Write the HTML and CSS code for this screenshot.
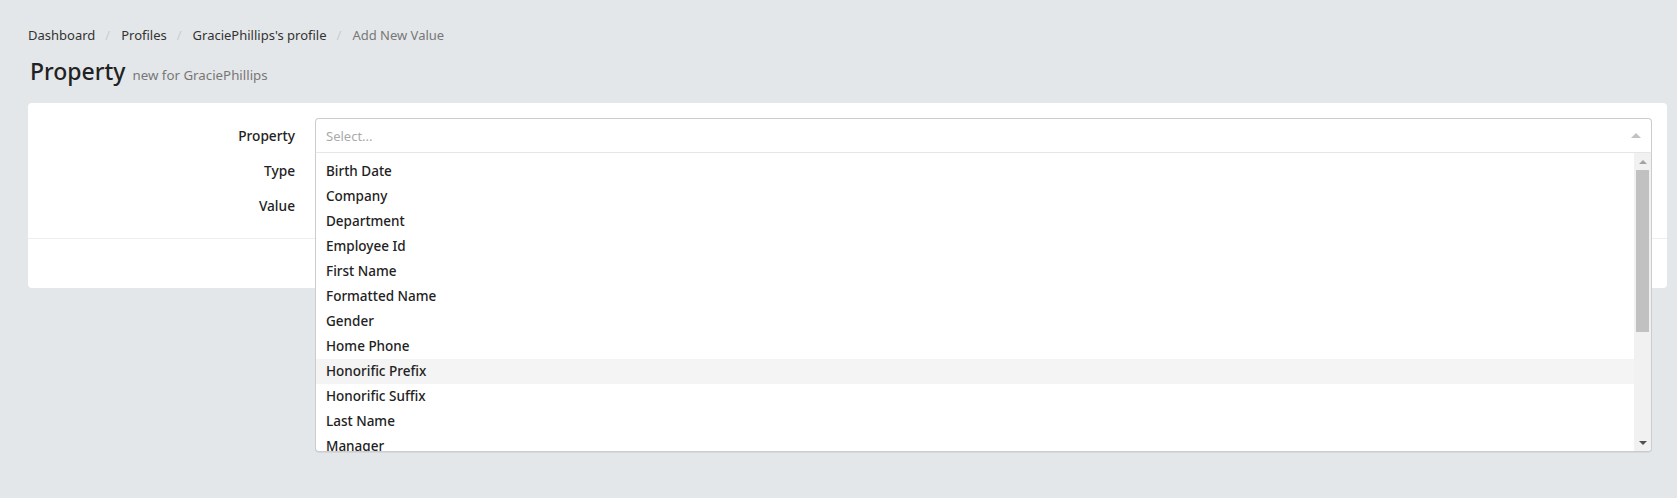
FILE: index.html
```html
<!DOCTYPE html>
<html lang="en">
<head>
<meta charset="utf-8">
<title>Property - new for GraciePhillips</title>
<link rel="stylesheet" href="styles.css">
</head>
<body>
<div class="page">
  <ol class="breadcrumb">
    <li><a href="#">Dashboard</a></li>
    <li class="sep">/</li>
    <li><a href="#">Profiles</a></li>
    <li class="sep">/</li>
    <li><a href="#">GraciePhillips's profile</a></li>
    <li class="sep">/</li>
    <li class="active">Add New Value</li>
  </ol>
  <h1 class="title">Property <small>new for GraciePhillips</small></h1>

  <div class="card">
    <div class="card-body">
      <div class="form-row">
        <label class="label">Property</label>
        <div class="field">
          <div class="select">
            <div class="select-control">
              <span class="placeholder">Select...</span>
              <span class="arrow"></span>
            </div>
            <div class="menu">
              <div class="options">
                <div class="option">Birth Date</div>
                <div class="option">Company</div>
                <div class="option">Department</div>
                <div class="option">Employee Id</div>
                <div class="option">First Name</div>
                <div class="option">Formatted Name</div>
                <div class="option">Gender</div>
                <div class="option">Home Phone</div>
                <div class="option focused">Honorific Prefix</div>
                <div class="option">Honorific Suffix</div>
                <div class="option">Last Name</div>
                <div class="option">Manager</div>
              </div>
              <div class="scrollbar">
                <div class="sb-btn"><span class="sb-up"></span></div>
                <div class="sb-track"><div class="sb-thumb"></div></div>
                <div class="sb-btn"><span class="sb-down"></span></div>
              </div>
            </div>
          </div>
        </div>
      </div>
      <div class="form-row">
        <label class="label">Type</label>
        <div class="field"></div>
      </div>
      <div class="form-row">
        <label class="label">Value</label>
        <div class="field"></div>
      </div>
    </div>
    <div class="card-footer"></div>
  </div>
</div>
</body>
</html>
```

FILE: styles.css
```css
* { box-sizing: border-box; }
html, body {
  margin: 0;
  padding: 0;
  background: #e4e7e9;
  font-family: "Noto Sans", "Open Sans", sans-serif;
  font-size: 13px;
  color: #333;
}
body {
  min-height: 100vh;
}
.page {
  padding: 26px 10px 0 28px;
}
.breadcrumb {
  list-style: none;
  margin: 0;
  padding: 0;
  display: flex;
  align-items: center;
  height: 18px;
  line-height: 18px;
}
.breadcrumb a {
  color: #333;
  text-decoration: none;
}
.breadcrumb .sep {
  color: #ccc;
  margin: 0 11px 0 10px;
}
.breadcrumb .active {
  color: #777;
}
.title {
  margin: 10px 0 0 2px;
  font-size: 23px;
  font-weight: 500;
  line-height: 34px;
  height: 34px;
  color: #222;
}
.title small {
  font-size: 13.3px;
  font-weight: 400;
  color: #777;
  padding-left: 1px;
}
.card {
  margin-top: 15px;
  background: #fff;
  border-radius: 4px;
  height: 185px;
  display: flex;
  flex-direction: column;
}
.card-body {
  padding: 15px 15px 15px 0;
  border-bottom: 1px solid #eee;
}
.card-footer {
  flex: 1;
}
.form-row {
  display: flex;
  height: 35px;
  align-items: center;
}
.label {
  width: 267px;
  text-align: right;
  color: #222;
  font-size: 13.7px;
  font-weight: 500;
  flex: none;
}
.field {
  flex: 1;
  margin-left: 20px;
  height: 35px;
  position: relative;
}
.select {
  position: relative;
  z-index: 5;
}
.select-control {
  height: 35px;
  border: 1px solid #ccc;
  border-bottom-color: #e6e6e6;
  border-radius: 4px 4px 0 0;
  background: #fff;
  display: flex;
  align-items: center;
  padding: 0 10px;
}
.placeholder {
  flex: 1;
  color: #aaa;
}
.arrow {
  width: 0;
  height: 0;
  border-style: solid;
  border-width: 0 5px 5px;
  border-color: transparent transparent #c2c2c2;
}
.menu {
  position: absolute;
  top: 35px;
  left: 0;
  right: 0;
  height: 299px;
  background: #fff;
  border: 1px solid #ccc;
  border-top: none;
  border-radius: 0 0 4px 4px;
  box-shadow: 0 1px 0 rgba(0, 0, 0, 0.06);
  display: flex;
  overflow: hidden;
}
.options {
  flex: 1;
  padding-top: 6px;
  overflow: hidden;
}
.option {
  height: 25px;
  line-height: 25px;
  padding-left: 10px;
  color: #222;
  font-size: 13.5px;
  font-weight: 500;
  white-space: nowrap;
}
.option.focused {
  background: #f4f4f4;
}
.scrollbar {
  width: 17px;
  flex: none;
  background: #f1f1f1;
  display: flex;
  flex-direction: column;
}
.sb-btn {
  height: 17px;
  flex: none;
  display: flex;
  align-items: center;
  justify-content: center;
}
.sb-up {
  width: 0;
  height: 0;
  border-style: solid;
  border-width: 0 4px 4px;
  border-color: transparent transparent #a3a3a3;
}
.sb-down {
  width: 0;
  height: 0;
  border-style: solid;
  border-width: 4px 4px 0;
  border-color: #505050 transparent transparent;
}
.sb-track {
  flex: 1;
  padding: 0 2px;
}
.sb-thumb {
  height: 162px;
  background: #c1c1c1;
}
```
